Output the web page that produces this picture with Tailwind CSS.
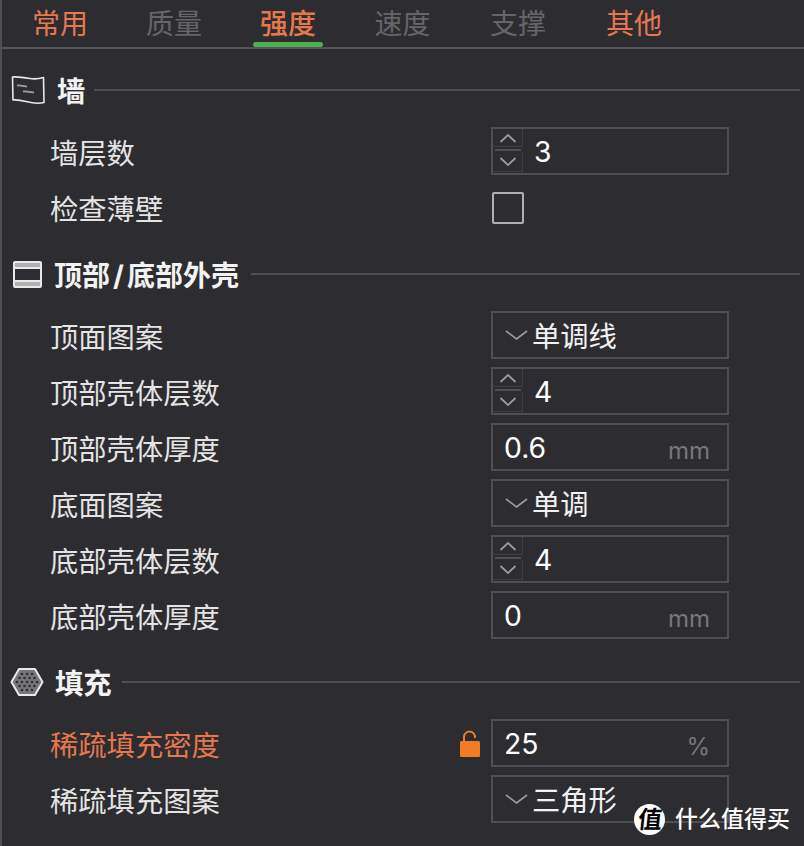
<!doctype html>
<html lang="zh-CN"><head><meta charset="utf-8"><script src="https://cdn.jsdelivr.net/npm/@tailwindcss/browser@4"></script></head>
<body class="bg-[#2d2c31]">
<div class="relative w-[804px] h-[846px] overflow-hidden bg-[#2d2c31] border-l-2 border-[#4f4e55] font-['Inter','Noto_Sans_CJK_SC',sans-serif] text-[28.3px] leading-none text-[#e4e4e4]">

<div class="flex h-[49px] border-b-2 border-[#55545a] text-[28px] -ml-[2px] pl-[2px]">
  <div class="w-[114px] ml-[1px] flex justify-center pt-[10px] text-[#e5784f]">常用</div>
  <div class="w-[114px] flex justify-center pt-[10px] text-[#66666a]">质量</div>
  <div class="relative w-[114px] flex justify-center pt-[10px] text-[#e5784f] font-medium">强度<div class="absolute left-[22px] top-[42px] w-[70px] h-[5px] rounded-full bg-[#4caf50]"></div></div>
  <div class="w-[115px] flex justify-center pt-[10px] text-[#66666a]">速度</div>
  <div class="w-[116px] flex justify-center pt-[10px] text-[#66666a]">支撑</div>
  <div class="w-[116px] flex justify-center pt-[10px] text-[#e5784f]">其他</div>
</div>

<section class="mt-[17px]">
  <div class="flex items-center h-[48px] pl-[8px] pr-[2px]">
    <svg class="w-[36px] h-[30px]" viewBox="0 0 36 30" fill="none" stroke="#e8e8e8" stroke-width="1.600"><path d="M2.500 2C8 1.500 14 2.500 20 3.500S30 3.500 33.500 2.500L34 27.500C28 29 22 28 16 26.500S7 24.500 3 25Z" stroke-linejoin="round"/><path d="M7 10.500c3-.5 6 .5 10 1.200M13 16.500c3-.5 7 .5 11 1" stroke="#a0a0a0" stroke-width="1.800"/></svg>
    <span class="ml-[11px] pt-[4px] font-bold text-[#f2f2f2]">墙</span><span class="ml-[9px] flex-1 h-[2px] bg-[#4f4e55] mr-[2px]"></span>
  </div>
  <div class="mt-[13px] flex flex-col gap-[8px]">
    <div class="flex items-center h-[48px] pl-[48px]"><span class="w-[441px] pt-[6px]">墙层数</span>
      <div class="flex items-center w-[238px] h-[48px] border-2 border-[#4f4e55]">
        <div class="flex flex-col w-[31px] h-[44px]"><div class="h-[18px] w-[30px] border-r border-b border-[#3f3e44] flex items-center justify-center"><svg class="w-[18px] h-[12px]" viewBox="0 0 18 12" fill="none" stroke="#9a9a9a" stroke-width="1.800"><path d="M1.500 10l7.500-7 7.500 7"/></svg></div><div class="ml-[2px] mr-[3px] mt-[2px] mb-[1px] h-[2px] bg-[#4f4e55]"></div><div class="h-[20px] w-[30px] border-r border-b border-[#3f3e44] flex items-center justify-center"><svg class="w-[18px] h-[12px]" viewBox="0 0 18 12" fill="none" stroke="#9a9a9a" stroke-width="1.800"><path d="M1.500 2l7.500 7 7.500-7"/></svg></div></div>
        <span class="ml-[10px] pt-[2px] text-white">3</span>
      </div></div>
    <div class="flex items-center h-[48px] pl-[48px]"><span class="w-[441px] pt-[6px]">检查薄壁</span><div class="ml-[1px] w-[32px] h-[32px] mt-[2px] border-2 border-[#b0b0b0] rounded-[2px]"></div></div>
  </div>
</section>

<section class="mt-[19px]">
  <div class="flex items-center h-[48px] pl-[10px] pr-[2px]">
    <svg class="w-[30px] h-[28px]" viewBox="0 0 30 28"><rect x="2" y="2" width="27" height="25" rx="1" fill="none" stroke="#e8e8e8" stroke-width="2"/><rect x="3" y="3" width="25" height="4" fill="#b0b0b0"/><rect x="3" y="22" width="25" height="4" fill="#b0b0b0"/><rect x="3" y="7" width="25" height="2" fill="#e8e8e8"/><rect x="3" y="20" width="25" height="2" fill="#e8e8e8"/></svg>
    <span class="ml-[12px] pt-[4px] font-bold text-[#f2f2f2] text-[28px]">顶部<span class="mx-[3px]">/</span>底部外壳</span><span class="ml-[12px] flex-1 h-[2px] bg-[#4f4e55] mr-[2px]"></span>
  </div>
  <div class="mt-[13px] flex flex-col gap-[8px]">
    <div class="flex items-center h-[48px] pl-[48px]"><span class="w-[441px] pt-[6px]">顶面图案</span><div class="flex items-center w-[238px] h-[48px] border-2 border-[#4f4e55]"><svg class="ml-[12px] w-[24px] h-[12px]" viewBox="0 0 24 12" fill="none" stroke="#9a9a9a" stroke-width="1.600"><path d="M1 2l10.500 8 10.500-8"/></svg><span class="ml-[3px] pt-[5px] text-[#f2f2f2]">单调线</span></div></div>
    <div class="flex items-center h-[48px] pl-[48px]"><span class="w-[441px] pt-[6px]">顶部壳体层数</span>
      <div class="flex items-center w-[238px] h-[48px] border-2 border-[#4f4e55]">
        <div class="flex flex-col w-[31px] h-[44px]"><div class="h-[18px] w-[30px] border-r border-b border-[#3f3e44] flex items-center justify-center"><svg class="w-[18px] h-[12px]" viewBox="0 0 18 12" fill="none" stroke="#9a9a9a" stroke-width="1.800"><path d="M1.500 10l7.500-7 7.500 7"/></svg></div><div class="ml-[2px] mr-[3px] mt-[2px] mb-[1px] h-[2px] bg-[#4f4e55]"></div><div class="h-[20px] w-[30px] border-r border-b border-[#3f3e44] flex items-center justify-center"><svg class="w-[18px] h-[12px]" viewBox="0 0 18 12" fill="none" stroke="#9a9a9a" stroke-width="1.800"><path d="M1.500 2l7.500 7 7.500-7"/></svg></div></div>
        <span class="ml-[10px] pt-[2px] text-white">4</span>
      </div></div>
    <div class="flex items-center h-[48px] pl-[48px]"><span class="w-[441px] pt-[6px]">顶部壳体厚度</span><div class="flex items-center justify-between w-[238px] h-[48px] border-2 border-[#4f4e55] pl-[11px] pr-[17px]"><span class="pt-[2px] text-white">0.6</span><span class="text-[24px] text-[#77777a] mt-[8px]">mm</span></div></div>
    <div class="flex items-center h-[48px] pl-[48px]"><span class="w-[441px] pt-[6px]">底面图案</span><div class="flex items-center w-[238px] h-[48px] border-2 border-[#4f4e55]"><svg class="ml-[12px] w-[24px] h-[12px]" viewBox="0 0 24 12" fill="none" stroke="#9a9a9a" stroke-width="1.600"><path d="M1 2l10.500 8 10.500-8"/></svg><span class="ml-[3px] pt-[5px] text-[#f2f2f2]">单调</span></div></div>
    <div class="flex items-center h-[48px] pl-[48px]"><span class="w-[441px] pt-[6px]">底部壳体层数</span>
      <div class="flex items-center w-[238px] h-[48px] border-2 border-[#4f4e55]">
        <div class="flex flex-col w-[31px] h-[44px]"><div class="h-[18px] w-[30px] border-r border-b border-[#3f3e44] flex items-center justify-center"><svg class="w-[18px] h-[12px]" viewBox="0 0 18 12" fill="none" stroke="#9a9a9a" stroke-width="1.800"><path d="M1.500 10l7.500-7 7.500 7"/></svg></div><div class="ml-[2px] mr-[3px] mt-[2px] mb-[1px] h-[2px] bg-[#4f4e55]"></div><div class="h-[20px] w-[30px] border-r border-b border-[#3f3e44] flex items-center justify-center"><svg class="w-[18px] h-[12px]" viewBox="0 0 18 12" fill="none" stroke="#9a9a9a" stroke-width="1.800"><path d="M1.500 2l7.500 7 7.500-7"/></svg></div></div>
        <span class="ml-[10px] pt-[2px] text-white">4</span>
      </div></div>
    <div class="flex items-center h-[48px] pl-[48px]"><span class="w-[441px] pt-[6px]">底部壳体厚度</span><div class="flex items-center justify-between w-[238px] h-[48px] border-2 border-[#4f4e55] pl-[11px] pr-[17px]"><span class="pt-[2px] text-white">0</span><span class="text-[24px] text-[#77777a] mt-[8px]">mm</span></div></div>
  </div>
</section>

<section class="mt-[19px]">
  <div class="flex items-center h-[48px] pl-[8px] pr-[2px]">
    <svg class="w-[34px] h-[30px]" viewBox="0 0 34 30"><path d="M9 2H25L32.500 15 25 28H9L1.500 15Z" fill="#77777a" stroke="#e8e8e8" stroke-width="2" stroke-linejoin="round"/><g fill="#2d2c31"><circle cx="12" cy="7" r="1.300"/><circle cx="17" cy="7" r="1.300"/><circle cx="22" cy="7" r="1.300"/><circle cx="9.500" cy="11" r="1.300"/><circle cx="14.500" cy="11" r="1.300"/><circle cx="19.500" cy="11" r="1.300"/><circle cx="24.500" cy="11" r="1.300"/><circle cx="7" cy="15" r="1.300"/><circle cx="12" cy="15" r="1.300"/><circle cx="17" cy="15" r="1.300"/><circle cx="22" cy="15" r="1.300"/><circle cx="27" cy="15" r="1.300"/><circle cx="9.500" cy="19" r="1.300"/><circle cx="14.500" cy="19" r="1.300"/><circle cx="19.500" cy="19" r="1.300"/><circle cx="24.500" cy="19" r="1.300"/><circle cx="12" cy="23" r="1.300"/><circle cx="17" cy="23" r="1.300"/><circle cx="22" cy="23" r="1.300"/></g></svg>
    <span class="ml-[11px] pt-[4px] font-bold text-[#f2f2f2]">填充</span><span class="ml-[10px] flex-1 h-[2px] bg-[#4f4e55] mr-[2px]"></span>
  </div>
  <div class="mt-[13px] flex flex-col gap-[8px]">
    <div class="flex items-center h-[48px] pl-[48px]"><span class="w-[410px] pt-[6px] text-[#e5784f]">稀疏填充密度</span>
      <svg class="w-[20px] h-[27px] mr-[11px] mt-[1px]" viewBox="0 0 20 27"><path d="M4 12V7a5.500 5.500 0 0 1 11 0v1" fill="none" stroke="#f07c28" stroke-width="2"/><rect y="11" width="20" height="16" rx="1.500" fill="#f07c28"/></svg>
      <div class="flex items-center justify-between w-[238px] h-[48px] border-2 border-[#4f4e55] pl-[11px] pr-[17px]"><span class="pt-[2px] text-white">25</span><span class="text-[24px] text-[#77777a] mt-[8px]">%</span></div></div>
    <div class="flex items-center h-[48px] pl-[48px]"><span class="w-[441px] pt-[6px]">稀疏填充图案</span><div class="flex items-center w-[238px] h-[48px] border-2 border-[#4f4e55]"><svg class="ml-[12px] w-[24px] h-[12px]" viewBox="0 0 24 12" fill="none" stroke="#9a9a9a" stroke-width="1.600"><path d="M1 2l10.500 8 10.500-8"/></svg><span class="ml-[3px] pt-[5px] text-[#f2f2f2]">三角形</span></div></div>
  </div>
</section>

<div class="absolute left-[632px] top-[804px] flex items-center">
  <div class="w-[31px] h-[31px] rounded-full bg-white flex items-center justify-center text-black text-[24px] font-bold"><span class="-skew-x-6">值</span></div>
  <span class="ml-[10px] text-[23px] text-white font-medium">什么值得买</span>
</div>
</div>
</body></html>
